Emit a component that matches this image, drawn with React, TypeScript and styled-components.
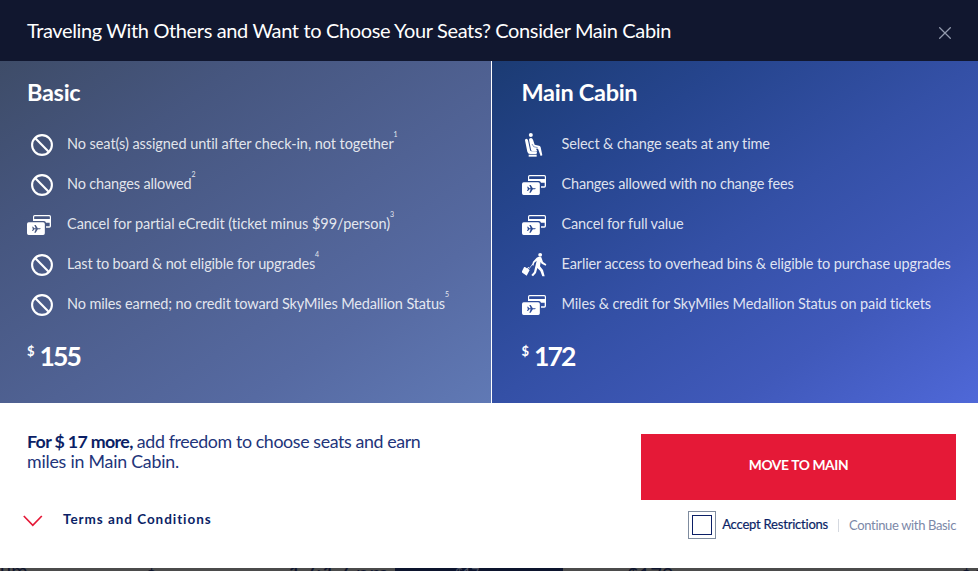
import React from 'react';
import styled, { createGlobalStyle } from 'styled-components';

const GlobalStyle = createGlobalStyle`
  *, *::before { box-sizing: border-box; }
  body {
    margin: 0;
    font-family: Lato, "Open Sans", sans-serif;
    background: #4a4a4a;
    font-variant-ligatures: none;
  }
`;

const Dialog = styled.div`
  width: 978px;
  height: 571px;
  display: flex;
  flex-direction: column;
  overflow: hidden;
`;

const Header = styled.header`
  height: 61px;
  flex: none;
  display: flex;
  align-items: center;
  justify-content: space-between;
  padding: 0 27px;
  background: #11172f;
`;

const Heading = styled.h1`
  margin: 0;
  padding-bottom: 2px;
  font-size: 20px;
  font-weight: 400;
  line-height: 24px;
  letter-spacing: -0.365px;
  white-space: nowrap;
  color: #fff;
`;

const CloseButton = styled.button`
  display: flex;
  padding: 4px 0 0;
  border: 0;
  background: none;
`;

const Panels = styled.div`
  flex: none;
  height: 342px;
  display: grid;
  grid-template-columns: 491px 486px;
  column-gap: 1px;
  background: #fff;
`;

const Panel = styled.section<{ $main?: boolean }>`
  padding: 16px 0 0 ${p => (p.$main ? 29.5 : 27)}px;
  color: #fff;
  background: ${p =>
    p.$main
      ? 'linear-gradient(to bottom right, #1b3b73 0%, #26458e 25%, #3450a6 50%, #4059ba 75%, #4f68d8 100%)'
      : 'linear-gradient(to bottom right, #3e4c68 0%, #46567f 25%, #506294 55%, #566aa2 75%, #6079b5 100%)'};
`;

const FareName = styled.h2`
  margin: 0 0 17px;
  font-size: 23.5px;
  font-weight: 700;
  line-height: 30px;
  letter-spacing: -0.3px;
`;

const Benefits = styled.ul`
  margin: 0;
  padding: 0;
  list-style: none;
`;

const Benefit = styled.li<{ $spacing: number }>`
  height: 40px;
  display: grid;
  grid-template-columns: 30px 1fr;
  column-gap: 10px;
  align-items: center;
  font-size: 14.5px;
  line-height: 20px;
  letter-spacing: ${p => p.$spacing}px;
  white-space: nowrap;
  color: rgba(255, 255, 255, 0.86);
`;

const IconCell = styled.span<{ $inset?: boolean }>`
  display: flex;
  padding: 2px 0 0 ${p => (p.$inset ? 3 : 0)}px;
`;

const Note = styled.sup`
  font-size: 7px;
  line-height: 0;
  letter-spacing: 0;
  vertical-align: 12px;
`;

const Price = styled.div`
  display: flex;
  align-items: flex-start;
  gap: 5px;
  margin-top: 16px;
  font-weight: 700;
`;

const Currency = styled.span`
  font-size: 13px;
  line-height: 23px;
`;

const Amount = styled.span`
  font-size: 26.5px;
  line-height: 32px;
  letter-spacing: -1.9px;
`;

const Footer = styled.footer`
  flex: none;
  height: 165px;
  display: flex;
  justify-content: space-between;
  padding: 31px 22px 0 27px;
  background: #fff;
  color: #0b1f66;
`;

const Offer = styled.div`
  display: flex;
  flex-direction: column;
`;

const Pitch = styled.p`
  margin: -3px 0 0;
  font-size: 17.8px;
  line-height: 20px;
  white-space: nowrap;
`;

const PitchLine = styled.span<{ $spacing?: number }>`
  letter-spacing: ${p => p.$spacing ?? -0.38}px;
  color: #22347a;
`;

const PitchLead = styled.strong`
  font-weight: 700;
  letter-spacing: -0.65px;
`;

const Terms = styled.button`
  display: flex;
  align-items: center;
  gap: 20px;
  margin: 38px 0 0 -4px;
  padding: 0;
  border: 0;
  background: none;
  font: 700 13.5px/20px Lato, sans-serif;
  letter-spacing: 0.95px;
  color: #0b1f66;

  svg {
    margin-top: 3px;
  }
`;

const Actions = styled.div`
  width: 315px;
`;

const MoveButton = styled.button`
  display: block;
  width: 100%;
  height: 66px;
  padding: 0 0 5px;
  border: 0;
  background: #e51937;
  color: #fff;
  font: 700 13.8px/20px Lato, sans-serif;
  letter-spacing: -0.38px;
`;

const Choices = styled.div`
  display: flex;
  align-items: center;
  justify-content: flex-end;
  margin-top: 11px;
  height: 28px;
  font-size: 13px;
  white-space: nowrap;
`;

const Checkbox = styled.span`
  width: 28px;
  height: 28px;
  flex: none;
  padding: 3px;
  border: 1px solid #7f8c9f;

  &::before {
    content: '';
    display: block;
    width: 20px;
    height: 20px;
    border: 1px solid #0b1f66;
  }
`;

const AcceptLabel = styled.label`
  padding: 0 10px 3px 6px;
  letter-spacing: -0.21px;
  -webkit-text-stroke: 0.2px currentColor;
`;

const Rule = styled.span`
  width: 1px;
  height: 13px;
  background: #d5d9e0;
`;

const Continue = styled.a`
  padding: 0 0 1px 10px;
  letter-spacing: -0.35px;
  color: #7c88a8;
`;

/* Sliver of the dimmed results page under the dialog. */
const Backdrop = styled.div`
  flex: none;
  height: 3px;
  display: grid;
  grid-template-columns: 145px 143px 107px 60px 108px 64px 333px 18px;
  overflow: hidden;
  background: #4b4b4b;
  color: #10162e;
`;

const BackdropCell = styled.span<{ $dark?: boolean; $size?: number; $line?: number }>`
  height: 3px;
  overflow: hidden;
  font-size: ${p => p.$size ?? 20}px;
  line-height: ${p => p.$line ?? 16}px;
  white-space: nowrap;
  background: ${p => (p.$dark ? '#0c142d' : 'transparent')};
  color: ${p => (p.$dark ? '#4b5060' : 'inherit')};
`;

const CloseIcon = () => (
  <svg width="12" height="12" viewBox="0 0 12 12" stroke="#939bad" strokeWidth="1.25">
    <path d="M.3.3l11.4 11.4M11.7.3L.3 11.7" />
  </svg>
);

const BanIcon = () => (
  <svg width="24" height="24" viewBox="0 0 24 24" fill="none" stroke="#fff" strokeWidth="2.1">
    <circle cx="12" cy="12" r="9.9" />
    <path d="M5.1 5.1l13.8 13.8" />
  </svg>
);

const CardsIcon = () => (
  <svg width="24" height="20" viewBox="0 0 72 60" fill="#fff">
    <path
      fillRule="evenodd"
      d="M23 0h44a5 5 0 0 1 5 5v28a5 5 0 0 1-5 5H57v-4h9a2 2 0 0 0 2-2V23H57a7 7 0 0 0-6-5H18V5a5 5 0 0 1 5-5zm0 4a2 2 0 0 0-1.500 2v6h47V6a2 2 0 0 0-2-2z"
    />
    <path
      fillRule="evenodd"
      d="M5 22h43.500a5 5 0 0 1 5 5v28a5 5 0 0 1-5 5H5a5 5 0 0 1-5-5V27a5 5 0 0 1 5-5zm10 13l2.500 5-1 1.500 1 1.500-2.500 5h3l4-5h4l-4 10h4l6.500-10h5.500q3.500-.3 3.500-1.500t-3.500-1.500h-5.500L26 30h-4l4 10h-4l-4-5z"
    />
  </svg>
);

const SeatIcon = () => (
  <svg width="24" height="26" viewBox="96 36 72 78" fill="#fff">
    <circle cx="122.500" cy="45" r="6" />
    <path d="M105 61q0-5 4-5 4 0 5 5l6 28q1 5 5 5h12q4 0 4 4t-4 4h-17q-6 0-8-7z" />
    <path d="M117 59q0-5 6-5 4 0 6 5l5 15 13 3q4 1 5 5l5 24-5 2-8-22h-6l4 8h-13q-5 0-6-5z" />
    <path d="M116 104h24v6h-24z" />
    <path d="M126 72l5 8 12 3" fill="none" stroke="#264890" strokeWidth="1.600" />
  </svg>
);

const TravelerIcon = () => (
  <svg width="25" height="26" viewBox="95 396 75 78" fill="#fff">
    <circle cx="149.500" cy="404.500" r="5.800" />
    <path d="M139 413q8-5 14-1l5 14 10 7-2 4-12-6-3-5-2 13 9 11 5 19h-7l-6-16-9-9-4 15-9 10-5-4 8-9 8-34-7 6-3 9-4-2 3-10z" />
    <path d="M127 432l-13 17" fill="none" stroke="#fff" strokeWidth="2" />
    <path d="M104 441l14 9-9 17-13-9q-2-2-1-4l6-12q1-2 3-1z" />
    <path d="M111 447l4-6" fill="none" stroke="#fff" strokeWidth="3" />
  </svg>
);

const ChevronIcon = () => (
  <svg width="20" height="12" viewBox="0 0 20 12" fill="none" stroke="#e51937" strokeWidth="1.7">
    <path d="M.8 1l9 9.300L18.800 1" />
  </svg>
);

type IconName = 'ban' | 'cards' | 'seat' | 'traveler';
type Item = { icon: IconName; text: string; spacing: number; note?: string };

const icons: Record<IconName, React.FC> = {
  ban: BanIcon,
  cards: CardsIcon,
  seat: SeatIcon,
  traveler: TravelerIcon,
};

const basicItems: Item[] = [
  { icon: 'ban', text: 'No seat(s) assigned until after check-in, not together', spacing: -0.07, note: '1' },
  { icon: 'ban', text: 'No changes allowed', spacing: -0.16, note: '2' },
  { icon: 'cards', text: 'Cancel for partial eCredit (ticket minus $99/person)', spacing: -0.04, note: '3' },
  { icon: 'ban', text: 'Last to board & not eligible for upgrades', spacing: -0.167, note: '4' },
  { icon: 'ban', text: 'No miles earned; no credit toward SkyMiles Medallion Status', spacing: -0.132, note: '5' },
];

const mainItems: Item[] = [
  { icon: 'seat', text: 'Select & change seats at any time', spacing: -0.11 },
  { icon: 'cards', text: 'Changes allowed with no change fees', spacing: -0.178 },
  { icon: 'cards', text: 'Cancel for full value', spacing: -0.161 },
  { icon: 'traveler', text: 'Earlier access to overhead bins & eligible to purchase upgrades', spacing: -0.13 },
  { icon: 'cards', text: 'Miles & credit for SkyMiles Medallion Status on paid tickets', spacing: -0.11 },
];

function Fare({ name, items, price, main }: { name: string; items: Item[]; price: string; main?: boolean }) {
  return (
    <Panel $main={main}>
      <FareName>{name}</FareName>
      <Benefits>
        {items.map(item => {
          const Icon = icons[item.icon];
          return (
            <Benefit key={item.text} $spacing={item.spacing}>
              <IconCell $inset={item.icon === 'ban'}>
                <Icon />
              </IconCell>
              <span>
                {item.text}
                {item.note && <Note>{item.note}</Note>}
              </span>
            </Benefit>
          );
        })}
      </Benefits>
      <Price>
        <Currency>$</Currency>
        <Amount>{price}</Amount>
      </Price>
    </Panel>
  );
}

export default function App() {
  return (
    <>
      <GlobalStyle />
      <Dialog>
        <Header>
          <Heading>Traveling With Others and Want to Choose Your Seats? Consider Main Cabin</Heading>
          <CloseButton aria-label="Close">
            <CloseIcon />
          </CloseButton>
        </Header>
        <Panels>
          <Fare name="Basic" items={basicItems} price="155" />
          <Fare name="Main Cabin" items={mainItems} price="172" main />
        </Panels>
        <Footer>
          <Offer>
            <Pitch>
              <PitchLead>For $ 17 more,</PitchLead>
              <PitchLine> add freedom to choose seats and earn</PitchLine>
              <br />
              <PitchLine $spacing={-0.22}>miles in Main Cabin.</PitchLine>
            </Pitch>
            <Terms>
              <ChevronIcon />
              Terms and Conditions
            </Terms>
          </Offer>
          <Actions>
            <MoveButton>MOVE TO MAIN</MoveButton>
            <Choices>
              <Checkbox />
              <AcceptLabel>Accept Restrictions</AcceptLabel>
              <Rule />
              <Continue>Continue with Basic</Continue>
            </Choices>
          </Actions>
        </Footer>
        <Backdrop aria-hidden="true">
          <BackdropCell $line={5}>um</BackdropCell>
          <BackdropCell>$</BackdropCell>
          <BackdropCell $size={24} $line={9}>17:17 pm</BackdropCell>
          <BackdropCell $dark />
          <BackdropCell $dark $size={14} $line={9}>$17</BackdropCell>
          <BackdropCell />
          <BackdropCell $line={13}>$173</BackdropCell>
          <BackdropCell>$1</BackdropCell>
        </Backdrop>
      </Dialog>
    </>
  );
}
